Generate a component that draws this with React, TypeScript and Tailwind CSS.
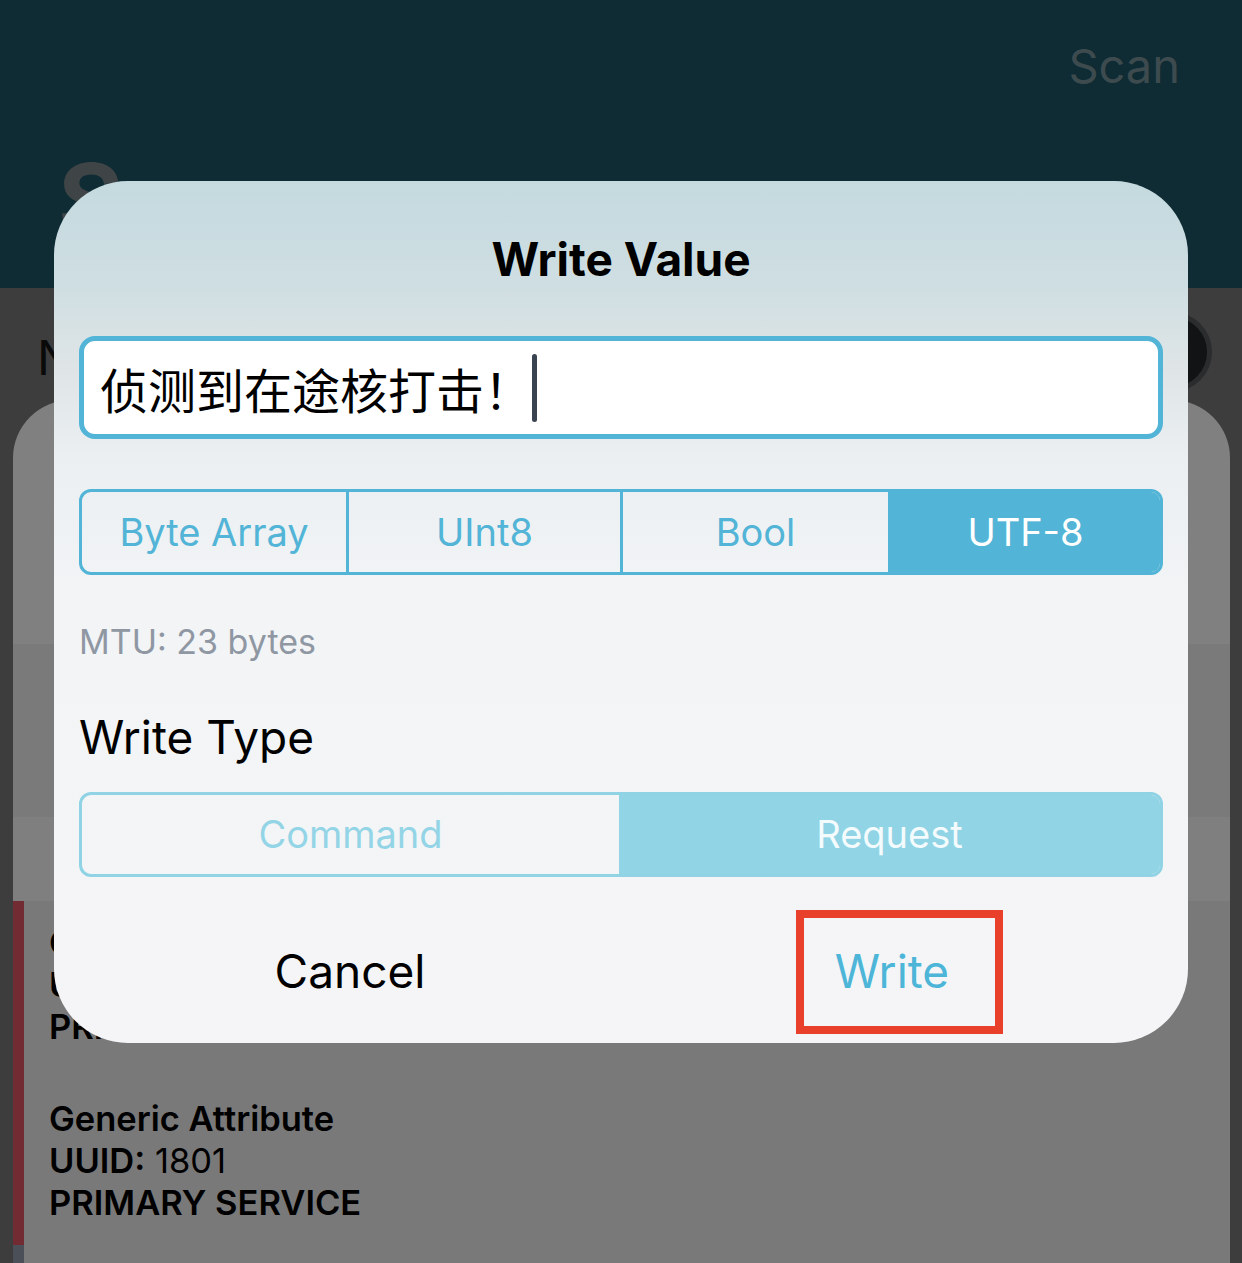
import React from 'react';

const SANS = "font-['Inter','Noto_Sans','Noto_Sans_CJK_SC',sans-serif]";

const ENCODINGS = ['Byte Array', 'UInt8', 'Bool', 'UTF-8'];

const ServiceItem: React.FC<{ name: string; uuid: string }> = ({ name, uuid }) => (
    <div className="flex flex-col text-[34.5px] leading-[42px] text-black">
        <span className="font-semibold">{name}</span>
        <span>
            <span className="font-semibold">UUID:</span> {uuid}
        </span>
        <span className="font-semibold">PRIMARY SERVICE</span>
    </div>
);

export default function App() {
    return (
        <div className={`relative w-[1242px] h-[1263px] overflow-hidden bg-[#3d3d3e] ${SANS}`}>
            {/* Nav header */}
            <div className="h-[288px] bg-[#0f2b34] flex flex-col">
                <div className="flex justify-end pt-[34px] pr-[62px] text-[47px] leading-[64px] text-[#3d4b4f]">
                    Scan
                </div>
                <div className="pl-[58px] pt-[52px] text-[100px] font-bold leading-none text-[#3f4547]">S</div>
            </div>

            {/* Device row */}
            <div className="h-[112px] flex items-start justify-between pl-[37px] pr-[30px] pt-[24px]">
                <span className="mt-[22px] text-[48px] leading-none text-[#0a0a0a]">N</span>
                <div className="w-[80px] h-[80px] rounded-full bg-[#111315] border-[5px] border-[#2b2c2e]" />
            </div>

            {/* Services sheet */}
            <div className="ml-[13px] mr-[12px] rounded-t-[58px] overflow-hidden flex flex-col">
                <div className="h-[244px] bg-[#808080]" />
                <div className="h-[173px] bg-[#7a7a7b]" />
                <div className="h-[84px] bg-[#7f7f80]" />
                <div className="flex bg-[#79797a]">
                    <div className="w-[11px] flex flex-col">
                        <div className="h-[344px] bg-[#722a33]" />
                        <div className="h-[40px] bg-[#4b5058]" />
                    </div>
                    <div className="flex flex-col gap-[50px] pl-[25px] pt-[21px]">
                        <ServiceItem name="Generic Access" uuid="1800" />
                        <ServiceItem name="Generic Attribute" uuid="1801" />
                    </div>
                </div>
            </div>

            {/* Write Value dialog */}
            <div className="absolute left-[54px] top-[181px] w-[1134px] h-[862px] rounded-[74px] bg-[linear-gradient(180deg,#c4dadf_0%,#cfdee2_12%,#dfe5e7_22%,#ebeff1_32%,#f2f4f6_48%,#f5f5f7_100%)] flex flex-col px-[25px]">
                <div className="mt-[55px] text-center text-[46px] font-bold leading-none text-black">Write Value</div>

                <div className="mt-[54px] h-[103px] rounded-[16px] border-[5px] border-[#52b4d6] bg-white flex items-center pl-[16px]">
                    <span className="text-[48px] leading-none text-black font-['Noto_Sans_CJK_SC',sans-serif]">
                        侦测到在途核打击！
                    </span>
                    <span className="w-[5px] h-[68px] rounded-full bg-[#3a4350]" />
                </div>

                <div className="mt-[50px] h-[86px] rounded-[12px] border-[3px] border-[#52b4d6] overflow-hidden grid grid-cols-[264px_274px_268px_1fr]">
                    {ENCODINGS.map((label, i) => (
                        <div
                            key={label}
                            className={`flex items-center justify-center text-[38px] ${i > 0 ? 'border-l-[3px] border-[#52b4d6]' : ''} ${i === 3 ? 'bg-[#52b4d6] text-white' : 'text-[#52b4d6]'}`}
                        >
                            {label}
                        </div>
                    ))}
                </div>

                <div className="mt-[50px] text-[34px] leading-none text-[#8f97a3]">MTU: 23 bytes</div>

                <div className="mt-[55px] text-[46px] leading-none text-black">Write Type</div>

                <div className="mt-[32px] h-[85px] rounded-[12px] border-[3px] border-[#8fd3e5] overflow-hidden grid grid-cols-[537px_1fr]">
                    <div className="flex items-center justify-center text-[38px] text-[#93d5e6]">Command</div>
                    <div className="flex items-center justify-center text-[38px] text-[#f4fbfd] bg-[#90d4e5]">Request</div>
                </div>

                <div className="mt-[71px] grid grid-cols-2 text-[46px] leading-none">
                    <div className="text-center text-black">Cancel</div>
                    <div className="text-center text-[#4db6d8]">Write</div>
                </div>
            </div>

            {/* Annotation */}
            <div className="absolute left-[796px] top-[910px] w-[207px] h-[124px] border-[8px] border-[#e8402a]" />
        </div>
    );
}
